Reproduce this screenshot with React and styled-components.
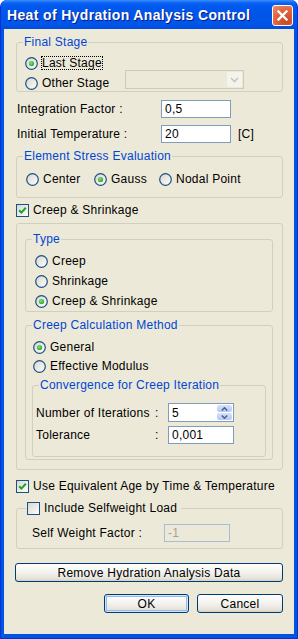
import styled, { createGlobalStyle } from 'styled-components'

/*---> Global <---*/
const GlobalStyle = createGlobalStyle`
  html, body {
    margin: 0;
    padding: 0;
    background: #ffffff;
  }
  body {
    font-family: 'Liberation Sans', Arial, sans-serif;
    font-size: 12px;
  }
`

/*---> Small drawings <---*/
function RadioMark({ checked }) {
  return (
    <svg width="13" height="13" viewBox="0 0 13 13">
      <defs>
        <linearGradient id="rg" x1="0" y1="0" x2="1" y2="1">
          <stop offset="0" stopColor="#d6d5cf" />
          <stop offset="1" stopColor="#ffffff" />
        </linearGradient>
        <radialGradient id="dot" cx="0.4" cy="0.4" r="0.7">
          <stop offset="0" stopColor="#7ee37b" />
          <stop offset="1" stopColor="#21a121" />
        </radialGradient>
      </defs>
      <circle cx="6.5" cy="6.5" r="5.8" fill="url(#rg)" stroke="#1c5180" strokeWidth="1.2" />
      {checked && <circle cx="6.5" cy="6.5" r="2.6" fill="url(#dot)" />}
    </svg>
  )
}

function CheckMark({ checked }) {
  return (
    <svg width="13" height="13" viewBox="0 0 13 13">
      <defs>
        <linearGradient id="cg" x1="0" y1="0" x2="1" y2="1">
          <stop offset="0" stopColor="#d6d5cf" />
          <stop offset="1" stopColor="#ffffff" />
        </linearGradient>
      </defs>
      <rect x="0.5" y="0.5" width="12" height="12" fill="url(#cg)" stroke="#1c5180" />
      {checked && (
        <polyline
          points="3.2,6.2 5.4,8.6 9.8,3.8"
          fill="none"
          stroke="#21a121"
          strokeWidth="2"
        />
      )}
    </svg>
  )
}

function Radio({ label, checked, focus, w }) {
  return (
    <Option $w={w}>
      <RadioMark checked={checked} />
      <OptionText $focus={focus}>{label}</OptionText>
    </Option>
  )
}

function Check({ label, checked }) {
  return (
    <Option>
      <CheckMark checked={checked} />
      <OptionText>{label}</OptionText>
    </Option>
  )
}

/*---> Component <---*/
function App() {
  return (
    <>
      <GlobalStyle />
      <Window>
        <TitleBar>
          <Title>Heat of Hydration Analysis Control</Title>
          <CloseButton>
            <svg width="11" height="11" viewBox="0 0 11 11">
              <path d="M1.5 1.5 L9.5 9.5 M9.5 1.5 L1.5 9.5" stroke="#fff" strokeWidth="2.4" strokeLinecap="square" />
            </svg>
          </CloseButton>
        </TitleBar>

        <Client>
          <Group>
            <Legend>Final Stage</Legend>
            <GroupBody $pad="6px 38px 0 8px">
              <Row $h={16}>
                <Radio label="Last Stage" checked focus />
              </Row>
              <Row $h={16} $mt={4}>
                <Radio label="Other Stage" />
                <ComboBox>
                  <ComboArrow>
                    <svg width="9" height="6" viewBox="0 0 9 6">
                      <polyline points="1,1 4.5,4.5 8,1" fill="none" stroke="#c9c7ba" strokeWidth="1.6" />
                    </svg>
                  </ComboArrow>
                </ComboBox>
              </Row>
            </GroupBody>
          </Group>

          <Row $h={18} $mt={8} $pl={1}>
            <FieldLabel $w={144}>Integration Factor :</FieldLabel>
            <TextBox $w={70}>0,5</TextBox>
          </Row>
          <Row $h={18} $mt={7} $pl={1}>
            <FieldLabel $w={144}>Initial Temperature :</FieldLabel>
            <TextBox $w={70}>20</TextBox>
            <Unit>[C]</Unit>
          </Row>

          <Group $mt={6}>
            <Legend>Element Stress Evaluation</Legend>
            <GroupBody $pad="8px 0 10px 9px">
              <Row $h={16}>
                <Radio label="Center" w={68} />
                <Radio label="Gauss" checked w={65} />
                <Radio label="Nodal Point" />
              </Row>
            </GroupBody>
          </Group>

          <Row $h={16} $mt={4}>
            <Check label="Creep & Shrinkage" checked />
          </Row>

          <Frame>
            <Group>
              <Legend>Type</Legend>
              <GroupBody $pad="7px 0 2px 9px">
                <Row $h={16}>
                  <Radio label="Creep" />
                </Row>
                <Row $h={16} $mt={4}>
                  <Radio label="Shrinkage" />
                </Row>
                <Row $h={16} $mt={4}>
                  <Radio label="Creep & Shrinkage" checked />
                </Row>
              </GroupBody>
            </Group>

            <Group $mt={6}>
              <Legend>Creep Calculation Method</Legend>
              <GroupBody $pad="7px 6px 2px 6px">
                <Row $h={16} $pl={1}>
                  <Radio label="General" checked />
                </Row>
                <Row $h={16} $mt={3} $pl={1}>
                  <Radio label="Effective Modulus" />
                </Row>

                <Group $mt={4}>
                  <Legend>Convergence for Creep Iteration</Legend>
                  <GroupBody $pad="12px 0 12px 3px">
                    <Row $h={18}>
                      <FieldLabel $w={119}>Number of Iterations</FieldLabel>
                      <Colon>:</Colon>
                      <SpinBox>
                        <span>5</span>
                        <SpinButtons>
                          <SpinHalf>
                            <svg width="7" height="4" viewBox="0 0 7 4">
                              <polyline points="0.8,3.5 3.5,0.8 6.2,3.5" fill="none" stroke="#4d6185" strokeWidth="1.5" />
                            </svg>
                          </SpinHalf>
                          <SpinHalf>
                            <svg width="7" height="4" viewBox="0 0 7 4">
                              <polyline points="0.8,0.5 3.5,3.2 6.2,0.5" fill="none" stroke="#4d6185" strokeWidth="1.5" />
                            </svg>
                          </SpinHalf>
                        </SpinButtons>
                      </SpinBox>
                    </Row>
                    <Row $h={18} $mt={4}>
                      <FieldLabel $w={119}>Tolerance</FieldLabel>
                      <Colon>:</Colon>
                      <TextBox $w={66}>0,001</TextBox>
                    </Row>
                  </GroupBody>
                </Group>
              </GroupBody>
            </Group>
          </Frame>

          <Row $h={16} $mt={8}>
            <Check label="Use Equivalent Age by Time & Temperature" checked />
          </Row>

          <Group $mt={7}>
            <Legend $check>
              <Check label="Include Selfweight Load" />
            </Legend>
            <GroupBody $pad="9px 0 6px 15px">
              <Row $h={18}>
                <FieldLabel $w={132}>Self Weight Factor :</FieldLabel>
                <TextBox $w={66} disabled>-1</TextBox>
              </Row>
            </GroupBody>
          </Group>

          <Button $mt={14} $wide>Remove Hydration Analysis Data</Button>

          <ButtonRow>
            <Button $default $w={85}>OK</Button>
            <Button $w={86}>Cancel</Button>
          </ButtonRow>
        </Client>
      </Window>
    </>
  )
}

/*---> Styles <---*/
const Window = styled.div`
  width: 298px;
  height: 639px;
  box-sizing: border-box;
  display: flex;
  flex-direction: column;
  background: #0054e3;
  border: 1px solid #0831d9;
  border-top: none;
  border-radius: 7px 7px 0 0;
  overflow: hidden;
`

const TitleBar = styled.div`
  height: 29px;
  flex: none;
  display: flex;
  align-items: center;
  justify-content: space-between;
  padding: 0 4px 0 6px;
  background: linear-gradient(
    180deg,
    #3d8ffb 0px,
    #0a62f5 3px,
    #0058ee 6px,
    #0055e6 18px,
    #0056ea 24px,
    #004cdc 29px
  );
`

const Title = styled.div`
  color: #ffffff;
  font-weight: bold;
  font-size: 14px;
  letter-spacing: 0.35px;
  text-shadow: 1px 1px 0 #0a1883;
  white-space: nowrap;
  margin-top: 1px;
`

const CloseButton = styled.div`
  width: 21px;
  height: 21px;
  box-sizing: border-box;
  display: flex;
  align-items: center;
  justify-content: center;
  border: 1px solid #ffffff;
  border-radius: 3px;
  background: radial-gradient(circle at 70% 80%, #cc4622 0%, #e2633f 55%, #f08f6f 100%);
  margin-top: 1px;
`

const Client = styled.div`
  flex: 1;
  display: flex;
  flex-direction: column;
  margin: 0 3px 4px 3px;
  padding: 6px 11px 0 12px;
  background: #ece9d8;
  color: #000000;
  letter-spacing: 0.25px;
`

const Group = styled.fieldset`
  margin: ${(p) => p.$mt || 0}px 0 0 0;
  padding: 0;
  min-width: 0;
  border: 1px solid #d0d0bf;
  border-radius: 3px;
`

const Legend = styled.legend`
  margin-left: ${(p) => (p.$check ? 9 : 6)}px;
  padding: 0 ${(p) => (p.$check ? 3 : 1)}px 0 1px;
  height: 14px;
  line-height: 14px;
  font-size: 12px;
  color: #0046d5;
`

const GroupBody = styled.div`
  display: flex;
  flex-direction: column;
  padding: ${(p) => p.$pad};
`

const Frame = styled.div`
  margin-top: 5px;
  padding: 8px 9px 9px 8px;
  border: 1px solid #d0d0bf;
  border-radius: 3px;
  display: flex;
  flex-direction: column;
`

const Row = styled.div`
  display: flex;
  align-items: center;
  height: ${(p) => p.$h}px;
  margin-top: ${(p) => p.$mt || 0}px;
  padding-left: ${(p) => p.$pl || 0}px;
`

const Option = styled.label`
  display: flex;
  align-items: center;
  gap: 3px;
  width: ${(p) => (p.$w ? `${p.$w}px` : 'auto')};
  flex: none;
  white-space: nowrap;
  line-height: 14px;
  color: #000000;

  svg {
    flex: none;
  }
`

const OptionText = styled.span`
  padding: 0 1px;
  outline: ${(p) => (p.$focus ? '1px dotted #000000' : 'none')};
  outline-offset: -1px;
`

const FieldLabel = styled.span`
  width: ${(p) => p.$w}px;
  flex: none;
  white-space: nowrap;
`

const Colon = styled.span`
  width: 13px;
  flex: none;
`

const TextBox = styled.div`
  width: ${(p) => p.$w}px;
  height: 18px;
  box-sizing: border-box;
  flex: none;
  display: flex;
  align-items: center;
  padding-left: 3px;
  border: 1px solid ${(p) => (p.disabled ? '#a9bdd2' : '#7f9db9')};
  background: ${(p) => (p.disabled ? '#ece9d8' : '#ffffff')};
  color: ${(p) => (p.disabled ? '#a5a290' : '#000000')};
`

const Unit = styled.span`
  margin-left: 7px;
`

const ComboBox = styled.div`
  width: 119px;
  height: 19px;
  box-sizing: border-box;
  margin: 0 0 7px auto;
  padding: 1px;
  display: flex;
  justify-content: flex-end;
  border: 1px solid #cdcab9;
  background: #ece9d8;
`

const ComboArrow = styled.div`
  width: 15px;
  display: flex;
  align-items: center;
  justify-content: center;
  background: #f4f3ee;
  border-radius: 1px;
`

const SpinBox = styled.div`
  width: 66px;
  height: 19px;
  box-sizing: border-box;
  flex: none;
  display: flex;
  align-items: center;
  justify-content: space-between;
  padding: 1px 1px 1px 3px;
  border: 1px solid #7f9db9;
  background: #ffffff;
  margin-top: -1px;
`

const SpinButtons = styled.div`
  width: 15px;
  height: 15px;
  display: flex;
  flex-direction: column;
  gap: 1px;
`

const SpinHalf = styled.div`
  flex: 1;
  display: flex;
  align-items: center;
  justify-content: center;
  border-radius: 2px;
  background: linear-gradient(180deg, #d4e2fc, #b4c8f6);
`

const Button = styled.div`
  height: 19px;
  box-sizing: border-box;
  width: ${(p) => (p.$w ? `${p.$w}px` : 'auto')};
  margin: ${(p) => (p.$mt ? `${p.$mt}px 0 0 ${p.$wide ? '-1px' : '0'}` : '0')};
  display: flex;
  align-items: center;
  justify-content: center;
  border: 1px solid #003c74;
  border-radius: 3px;
  background: linear-gradient(180deg, #ffffff 0%, #f3f2ee 50%, #e6e3da 85%, #d6d0c5 100%);
  box-shadow: ${(p) =>
    p.$default ? 'inset 0 0 0 1px #cee7ff, inset 0 0 0 2px #98b8ea' : 'none'};
  color: #000000;
  white-space: nowrap;
`

const ButtonRow = styled.div`
  display: flex;
  justify-content: flex-end;
  gap: 8px;
  margin-top: 12px;
`

export default App
